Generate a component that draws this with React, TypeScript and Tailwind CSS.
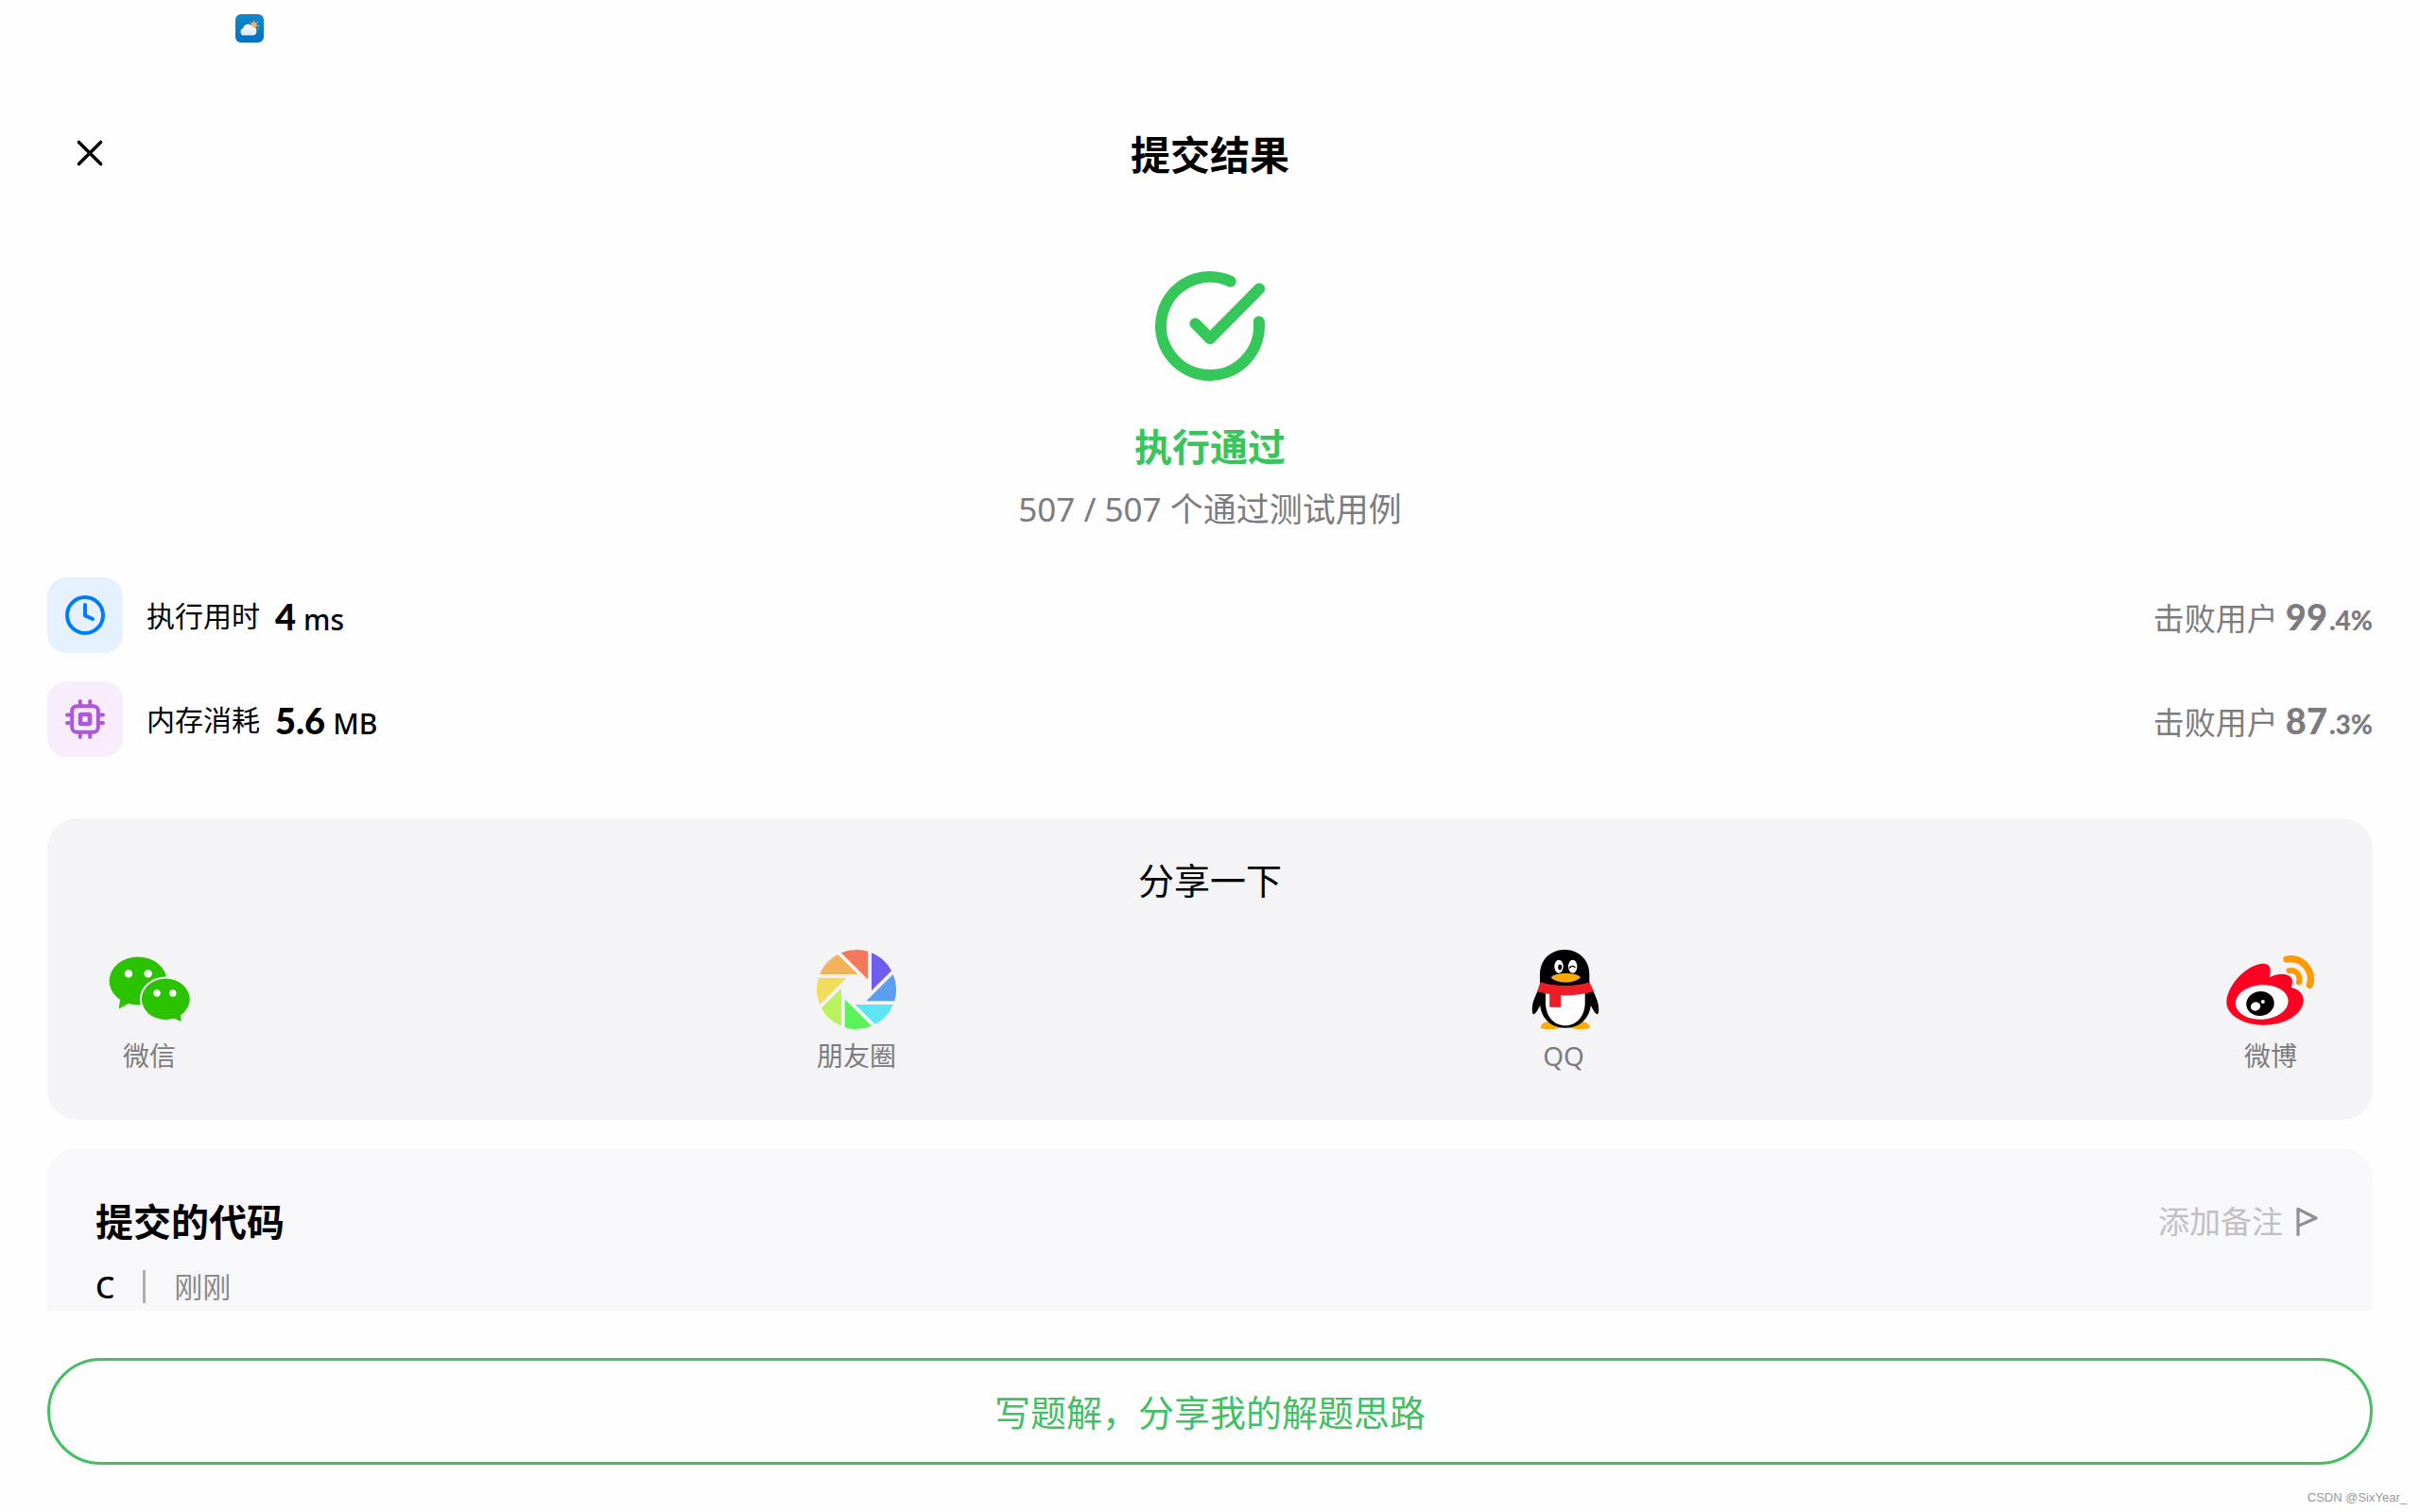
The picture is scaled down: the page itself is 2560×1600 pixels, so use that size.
import React from "react";

const petals = [
	"#6f5cf0",
	"#5a9ef2",
	"#5ce5f2",
	"#5cf25c",
	"#b8f25c",
	"#f2dc5c",
	"#f2b25c",
	"#f2785c",
];

const Icon = {
	weather: () => (
		<svg viewBox="0 0 30 30" className="size-[30px]" aria-hidden="true">
			<defs>
				<linearGradient id="sky" x1="0" y1="0" x2="0" y2="1">
					<stop offset="0" stopColor="#1287c9" />
					<stop offset="1" stopColor="#0070c6" />
				</linearGradient>
				<linearGradient id="cloud" x1="0" y1="0" x2="0" y2="1">
					<stop offset="0" stopColor="#ffffff" />
					<stop offset="1" stopColor="#d3e6f5" />
				</linearGradient>
			</defs>
			<rect width="30" height="30" rx="6" fill="url(#sky)" />
			<g stroke="#e0c49c" strokeWidth="1" strokeLinecap="round">
				<path d="M19.7 6.8v1.2M15.6 8.2l1 1M23.8 8.2l-1 1M23.8 12.4h1.2M23 15.2l.8.8" />
			</g>
			<circle cx="19.7" cy="11.4" r="3.1" fill="#f0b070" />
			<path d="M9 23.6a4.2 4.2 0 0 1-1-8.2 5.4 5.4 0 0 1 10-1.600 4.900 4.900 0 0 1 1 9.800z" fill="#035a9c" opacity="0.6" />
			<path d="M9 22.600a3.900 3.900 0 0 1-.8-7.600 5.200 5.200 0 0 1 9.800-1.500 4.600 4.600 0 0 1 .8 9.100z" fill="url(#cloud)" />
		</svg>
	),
	close: () => (
		<svg viewBox="0 0 30 30" className="size-[30px]" fill="none" stroke="#000" strokeWidth="3.5" strokeLinecap="round">
			<path d="M3.4 3.4l23.2 23.2M26.6 3.4L3.4 26.6" />
		</svg>
	),
	passed: () => (
		<svg
			viewBox="0 0 116 116"
			className="size-[116px]"
			fill="none"
			stroke="#35c759"
			strokeWidth="12"
			strokeLinecap="round"
			strokeLinejoin="round"
			aria-hidden="true"
		>
			<path d="M79.6 10.7A52 52 0 1 0 109.8 53.4" />
			<path d="M42.4 55.4L58 71.2L110.2 18.6" />
		</svg>
	),
	clock: () => (
		<svg
			viewBox="0 0 48 48"
			className="size-12"
			fill="none"
			stroke="#007aff"
			strokeWidth="4"
			strokeLinecap="round"
			strokeLinejoin="round"
			aria-hidden="true"
		>
			<circle cx="24" cy="24" r="19" />
			<path d="M24 13v11.4l8 3.6" />
		</svg>
	),
	chip: () => (
		<svg viewBox="0 0 48 48" className="size-12" fill="none" stroke="#af57db" strokeWidth="4" strokeLinecap="round" aria-hidden="true">
			<rect x="10.2" y="10.2" width="27.6" height="27.6" rx="5" />
			<rect x="19" y="19" width="10" height="10" rx="1" strokeWidth="4.6" />
			<path d="M18.8 5v4M29.2 5v4M18.8 39v4M29.2 39v4M5 19.4h4M5 28h4M39 19.4h4M39 28h4" />
		</svg>
	),
	flag: () => (
		<svg
			viewBox="0 0 24 32"
			className="h-8 w-6"
			fill="none"
			stroke="#8e8e93"
			strokeWidth="3.2"
			strokeLinecap="round"
			strokeLinejoin="round"
			aria-hidden="true"
		>
			<path d="M2 29.5V2.4L21 12L2 20.4" />
		</svg>
	),
	wechat: () => (
		<svg viewBox="0 0 96 96" className="size-24" aria-hidden="true">
			<g fill="#2bc200">
				<ellipse cx="36" cy="39" rx="30.4" ry="25.4" />
				<path d="M17.6 56L15.6 68.4L28 62z" />
			</g>
			<circle cx="26" cy="31.4" r="4.2" fill="#fff" />
			<circle cx="46.7" cy="31.4" r="4.2" fill="#fff" />
			<ellipse cx="65.3" cy="58.3" rx="27.4" ry="23.8" fill="#f4f4f7" />
			<g fill="#2bc200">
				<ellipse cx="65.3" cy="58.3" rx="25.4" ry="21.7" />
				<path d="M72.6 78L81.8 82L80.4 73z" />
			</g>
			<circle cx="56" cy="52" r="3.7" fill="#fff" />
			<circle cx="72.8" cy="52" r="3.7" fill="#fff" />
		</svg>
	),
	moments: () => (
		<svg viewBox="-48 -48 96 96" className="size-24" aria-hidden="true">
			{petals.map((color, i) => (
				<path key={color} d="M16 1.3V-38.8A42 42 0 0 1 37.1-19.8Z" fill={color} transform={`rotate(${i * 45})`} />
			))}
		</svg>
	),
	qq: () => (
		<svg viewBox="0 0 96 96" className="size-24" aria-hidden="true">
			<path
				d="M23.7 88C24 84 30 81 37 82H62C69 81 75.6 84 76 88C76 90 68 90 62 90L50 88L38 90C30 90 23.7 90 23.7 88Z"
				fill="#faab07"
			/>
			<path
				d="M22 47C18 55 14.8 62 14.8 69C14.8 73 15.5 75 17 74C19 73 21 69 23.2 65ZM78 47C82 55 85.2 62 85.2 69C85.2 73 84.5 75 83 74C81 73 79 69 76.8 65Z"
				fill="#000"
			/>
			<path
				d="M23 42V32C23 16 35 6 49.2 6C63.5 6 75.3 16 75.3 32V42L78.5 50L76.8 65C75 80 64 88.7 50 88.7C36 88.7 25 80 23.2 65L21 50Z"
				fill="#000"
			/>
			<path d="M29 50H70.7V62C70.7 77 61 86.3 50 86.3C38 86.3 29 77 29 62Z" fill="#fff" />
			<path d="M23.7 40.3C40 45.3 60 45.3 75.7 40.3L80 50.3C60 55.6 40 55.6 20 50.3Z" fill="#ed1c26" />
			<path d="M33.2 50H45.2V66.8H33.2Z" fill="#ed1c26" />
			<ellipse cx="43" cy="23.7" rx="4.7" ry="7" fill="#fff" />
			<ellipse cx="57.7" cy="23.7" rx="4.7" ry="7" fill="#fff" />
			<ellipse cx="44.2" cy="24.5" rx="2" ry="3" fill="#000" />
			<path d="M54.6 25Q57 21.8 60 24.6" fill="none" stroke="#000" strokeWidth="1.3" strokeLinecap="round" />
			<path
				d="M34.7 35.5C37 32 44 31 50.3 31C57 31 64 32 66 35.5C62 39 57 40.5 50.3 40.5C44 40.5 38 39 34.7 35.5Z"
				fill="#faab07"
			/>
		</svg>
	),
	weibo: () => (
		<svg viewBox="0 0 96 96" className="size-24" aria-hidden="true">
			<path
				d="M1.3 61C2 47 15 30 29.5 23.5C38 19.8 44.5 20 46.8 24C48.6 27.5 47.5 31.5 46.8 35.3C54 31.5 64 30 69 34.8C72.2 38 70.8 42.5 69.8 46C77 47.5 83 52.5 82.8 60C82 75 62 86 40 85.7C19 85.4 0.8 75 1.3 61Z"
				fill="#fe0021"
			/>
			<ellipse cx="38.7" cy="61.5" rx="28" ry="18.3" transform="rotate(-4 38.7 61.5)" fill="#fff" />
			<ellipse cx="37" cy="63" rx="14.8" ry="13" transform="rotate(-10 37 63)" fill="#000" />
			<ellipse cx="32" cy="66" rx="5.2" ry="4.6" transform="rotate(-20 32 66)" fill="#fff" />
			<circle cx="39.8" cy="61" r="2" fill="#fff" />
			<g fill="none" stroke="#ff9900" strokeLinecap="round">
				<path d="M65 16C82 13 94 29 89.3 43.5" strokeWidth="7.2" />
				<path d="M67.5 28.2C75.5 26.5 80 34 78 40.3" strokeWidth="6" />
			</g>
		</svg>
	),
};

const stats = [
	{ icon: <Icon.clock />, tile: "bg-[#e5f1ff]", label: "执行用时", value: "4", unit: "ms", whole: "99", rest: ".4%" },
	{ icon: <Icon.chip />, tile: "bg-[#f7edfc]", label: "内存消耗", value: "5.6", unit: "MB", whole: "87", rest: ".3%" },
];

const shares = [
	{ icon: <Icon.wechat />, name: "微信" },
	{ icon: <Icon.moments />, name: "朋友圈" },
	{ icon: <Icon.qq />, name: "QQ" },
	{ icon: <Icon.weibo />, name: "微博" },
];

export default function App() {
	return (
		<div className="relative flex h-screen flex-col bg-[#fefefe] font-['Noto_Sans','Noto_Sans_CJK_SC',sans-serif] text-black">
			<div className="flex px-[249px] py-[15px]">
				<Icon.weather />
			</div>

			<header className="mt-[50px] grid h-[104px] grid-cols-[1fr_auto_1fr] items-center px-20">
				<button type="button" aria-label="关闭" className="justify-self-start">
					<Icon.close />
				</button>
				<h1 className="pt-1 text-[42px] leading-14 font-bold">提交结果</h1>
			</header>

			<main className="min-h-0 flex-1 overflow-y-auto px-[50px] pt-[73px] [scrollbar-width:none]">
				<section className="flex flex-col items-center">
					<Icon.passed />
					<h2 className="mt-[42px] text-[40px] leading-14 font-bold text-[#3ac45c]">执行通过</h2>
					<p className="mt-[14px] text-[35px] leading-12 text-[#7c7c80]">507 / 507 个通过测试用例</p>
				</section>

				<section className="mt-12 flex flex-col gap-[30px]">
					{stats.map((s) => (
						<div key={s.label} className="flex items-center">
							<div className={`flex size-20 items-center justify-center rounded-[20px] ${s.tile}`}>{s.icon}</div>
							<span className="ml-[25px] pt-[2px] text-[30px] leading-10">{s.label}</span>
							<p className="ml-4 flex items-baseline gap-2 pt-[6px] leading-10">
								<span className="font-['Lato',sans-serif] text-[38px] font-black">{s.value}</span>
								<span className="text-[30px] font-medium">{s.unit}</span>
							</p>
							<p className="ml-auto flex items-baseline pt-[6px] leading-10 text-[#7c7c80]">
								<span className="text-[33px]">击败用户</span>
								<span className="ml-2 font-['Lato',sans-serif] text-[38px] font-black">{s.whole}</span>
								<span className="ml-[2px] font-['Lato',sans-serif] text-[28px] font-black">{s.rest}</span>
							</p>
						</div>
					))}
				</section>

				<section className="mt-[65px] rounded-[32px] bg-[#f4f4f7] px-[60px] pt-10 pb-12">
					<h2 className="text-center text-[38px] leading-[50px]">分享一下</h2>
					<div className="mt-[43px] flex justify-between">
						{shares.map((s) => (
							<button key={s.name} type="button" className="flex w-24 flex-col items-center gap-[2px]">
								{s.icon}
								<span className="text-[28px] leading-10 text-[#7c7c80]">{s.name}</span>
							</button>
						))}
					</div>
				</section>

				<section className="mt-[30px] rounded-[32px] bg-[#f8f8fa] px-[51px] pt-[50px] pb-24">
					<div className="flex items-center justify-between">
						<h2 className="text-[40px] leading-14 font-bold">提交的代码</h2>
						<button type="button" className="flex items-center gap-[14px] pr-[6px] text-[33px] leading-12 text-[#c0c0c3]">
							添加备注
							<Icon.flag />
						</button>
					</div>
					<div className="mt-[23px] flex h-[35px] items-center">
						<span className="text-[32px] font-medium">C</span>
						<span className="ml-[30px] h-full w-[3px] bg-[#aeaeb2]" />
						<span className="ml-[30px] text-[30px] text-[#8a8a8e]">刚刚</span>
					</div>
				</section>
			</main>

			<footer className="px-[50px] py-[50px]">
				<button
					type="button"
					className="h-[113px] w-full rounded-full border-3 border-[#45bf63] text-[38px] leading-[52px] text-[#45bf63]"
				>
					写题解，分享我的解题思路
				</button>
			</footer>

			<span className="absolute right-[14px] bottom-[5px] font-['Liberation_Sans',sans-serif] text-[13px] leading-5 text-[#999]">
				CSDN @SixYear_
			</span>
		</div>
	);
}
